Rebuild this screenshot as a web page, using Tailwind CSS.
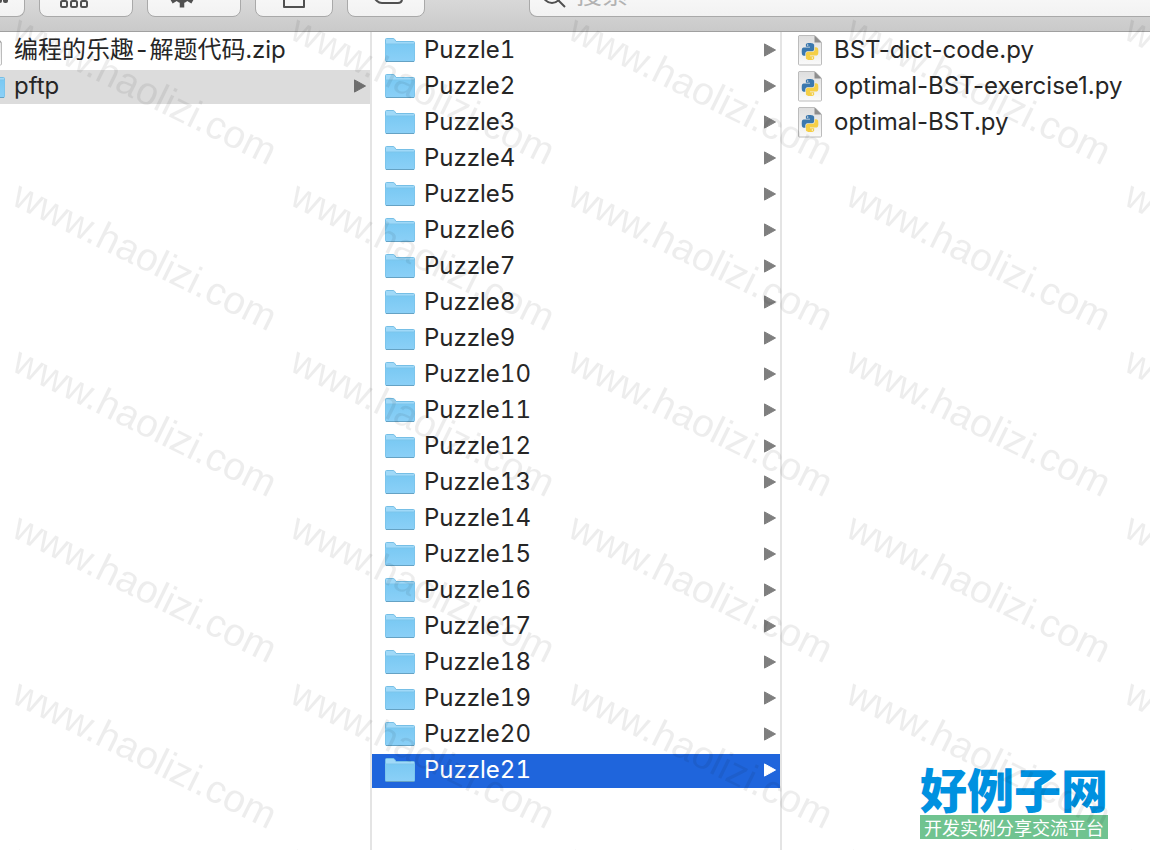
<!DOCTYPE html>
<html lang="zh-CN">
<head>
    <meta charset="UTF-8">
    <meta name="viewport" content="width=device-width, initial-scale=1.0">
    <title>pftp</title>
    <script src="https://cdn.jsdelivr.net/npm/@tailwindcss/browser@4"></script>
</head>
<body class="relative flex flex-col h-screen overflow-hidden bg-white text-[#262626] font-[Inter,'Noto_Sans_CJK_SC',sans-serif]">
    <!-- Shared icons -->
    <svg class="absolute w-0 h-0" aria-hidden="true">
        <defs>
            <linearGradient id="folderFill" x1="0" y1="0" x2="0" y2="1">
                <stop offset="0" stop-color="#7ac9f3"/>
                <stop offset="1" stop-color="#8bd0f7"/>
            </linearGradient>
            <linearGradient id="pageFill" x1="0" y1="0" x2="0" y2="1">
                <stop offset="0" stop-color="#dedede"/>
                <stop offset="1" stop-color="#fafafa"/>
            </linearGradient>
        </defs>
        <symbol id="folder" viewBox="0 0 30 26">
            <path d="M0.5 4V2.5Q0.5 1.5 1.5 1.5H8Q9 1.5 9.6 2.2L11 4.5H28.5Q29.5 4.5 29.5 5.5V23H0.5Z" fill="#a0d9f8" stroke="#76bfe6"/>
            <path d="M0.5 7H29.5V23.5Q29.5 24.5 28.5 24.5H1.5Q0.5 24.5 0.5 23.5Z" fill="url(#folderFill)" stroke="#7cc5ec"/>
            <path d="M1 24.5H29" stroke="#65a2c4"/>
        </symbol>
        <symbol id="page" viewBox="0 0 24 31">
            <path d="M1 0.5H16.5L23.5 7.5V29Q23.5 30 22.5 30H1.5Q0.5 30 0.5 29V1Z" fill="url(#pageFill)" stroke="#bcbcbc"/>
            <path d="M16.5 0.5V7.5H23.5Z" fill="#8e8e8e"/>
            <path d="M17.5 0.5L23.5 6.5" stroke="#e8e8e8"/>
        </symbol>
        <symbol id="snake" viewBox="0 0 24 24">
            <path d="M14.25.18l.9.2.73.26.59.3.45.32.34.34.25.34.16.33.1.3.04.26.02.2-.01.13V8.5l-.05.63-.13.55-.21.46-.26.38-.3.31-.33.25-.35.19-.35.14-.33.1-.3.07-.26.04-.21.02H8.77l-.69.05-.59.14-.5.22-.41.27-.33.32-.27.35-.2.36-.15.37-.1.35-.07.32-.04.27-.02.21v3.06H3.17l-.21-.03-.28-.07-.32-.12-.35-.18-.36-.26-.36-.36-.35-.46-.32-.59-.28-.73-.21-.88-.14-1.05-.05-1.23.06-1.22.16-1.04.24-.87.32-.71.36-.57.4-.44.42-.33.42-.24.4-.16.36-.1.32-.05.24-.01h.16l.06.01h8.16v-.83H6.18l-.01-2.75-.02-.37.05-.34.11-.31.17-.28.25-.26.31-.23.38-.2.44-.18.51-.15.58-.12.64-.1.71-.06.77-.04.84-.02 1.27.05zm-6.3 1.98l-.23.33-.08.41.08.41.23.34.33.22.41.09.41-.09.33-.22.23-.34.08-.41-.08-.41-.23-.33-.33-.22-.41-.09-.41.09z"/>
        </symbol>
        <symbol id="python" viewBox="0 0 24 31">
            <use href="#page"/>
            <g transform="translate(3.5 8) scale(0.71)">
                <use href="#snake" width="24" height="24" fill="#3b78ae"/>
                <use href="#snake" width="24" height="24" fill="#f5cf47" transform="rotate(180 12 12)"/>
            </g>
        </symbol>
        <symbol id="arrow" viewBox="0 0 12 14">
            <path d="M0.5 0.9L11.5 7L0.5 13.1Z" fill="currentColor" stroke="currentColor" stroke-linejoin="round"/>
        </symbol>
    </svg>

    <!-- Toolbar -->
    <header class="flex items-end gap-[14px] h-8 shrink-0 overflow-hidden pb-[14px] border-b border-[#a0a0a0] bg-linear-to-b from-[#d8d8d8] to-[#cacaca] text-[#505050]">
        <button aria-label="列表" class="w-[25px] h-11 shrink-0 flex items-end rounded-br-lg border-b border-r border-[#a9a9a9] bg-linear-to-b from-[#fdfdfd] to-[#f2f2f2]">
            <svg class="w-6 h-11" viewBox="0 0 24 44" fill="currentColor"><rect x="-3" y="26" width="5" height="5" rx="2"/><rect x="3" y="26" width="5" height="5" rx="2"/></svg>
        </button>
        <button aria-label="分组" class="w-[94px] h-11 shrink-0 flex justify-center rounded-lg border border-[#a9a9a9] bg-linear-to-b from-[#fdfdfd] to-[#f2f2f2]">
            <svg class="w-[94px] h-11 -mt-px shrink-0" viewBox="0 0 94 44" fill="none" stroke="currentColor" stroke-width="2"><rect x="22" y="28" width="6" height="6" rx="1.5"/><rect x="32" y="28" width="6" height="6" rx="1.5"/><rect x="42" y="28" width="6" height="6" rx="1.5"/></svg>
        </button>
        <button aria-label="操作" class="w-[94px] h-11 shrink-0 flex justify-center rounded-lg border border-[#a9a9a9] bg-linear-to-b from-[#fdfdfd] to-[#f2f2f2]">
            <svg class="w-[94px] h-11 -mt-px shrink-0" viewBox="0 0 94 44" fill="none" stroke="currentColor" stroke-width="4.5"><circle cx="35" cy="22" r="6"/><path d="M35 10V34.5M24.5 16L45.5 28.5M24.5 28.5L45.5 16"/></svg>
        </button>
        <button aria-label="共享" class="w-[78px] h-11 shrink-0 flex justify-center rounded-lg border border-[#a9a9a9] bg-linear-to-b from-[#fdfdfd] to-[#f2f2f2]">
            <svg class="w-[78px] h-11 -mt-px shrink-0" viewBox="0 0 78 44" fill="none" stroke="currentColor" stroke-width="2" stroke-linejoin="round"><path d="M29 18V34H49V18"/></svg>
        </button>
        <button aria-label="标签" class="w-[78px] h-11 shrink-0 flex justify-center rounded-lg border border-[#a9a9a9] bg-linear-to-b from-[#fdfdfd] to-[#f2f2f2]">
            <svg class="w-[78px] h-11 -mt-px shrink-0" viewBox="0 0 78 44" fill="none" stroke="currentColor" stroke-width="2"><path d="M34 12H51Q55 12 55 16V26Q55 30 51 30H35Q32 30 30 28L23 21L30 14Q32 12 34 12Z"/></svg>
        </button>
        <label class="flex flex-1 h-11 ml-[90px] rounded-l-lg border border-r-0 border-[#a9a9a9] bg-linear-to-b from-[#fdfdfd] to-[#f2f2f2] overflow-hidden">
            <svg class="w-[46px] h-11 -mt-px shrink-0" viewBox="0 0 46 44" fill="none" stroke="currentColor" stroke-width="2"><circle cx="22" cy="21" r="9"/><path d="M28 27L35 34"/></svg>
            <input type="text" aria-label="搜索" placeholder="搜索" class="flex-1 h-9 mt-[2px] text-[26px] outline-none placeholder:text-[#b2b2b2]">
        </label>
    </header>

    <!-- Columns -->
    <main class="flex flex-1 min-h-0 text-2xl">
        <nav aria-label="文件夹" class="flex justify-end w-[370px] shrink-0 overflow-hidden tabular-nums">
            <ul class="w-[408px] shrink-0 pt-[2px] space-y-[2px]">
                <li>
                    <a href="#" class="flex items-center gap-[9px] h-[34px] pl-[13px] pr-1 pb-[2px]">
                        <span class="flex justify-center w-[30px] shrink-0"><svg class="w-6 h-[31px]"><use href="#page"/></svg></span>
                        <span class="whitespace-nowrap">编程的乐趣-解题代码.zip</span>
                    </a>
                </li>
                <li>
                    <a href="#" class="flex items-center gap-[9px] h-[34px] pl-[13px] pr-1 pb-[2px] bg-[#dcdcdc]">
                        <svg class="w-[30px] h-[26px] shrink-0"><use href="#folder"/></svg>
                        <span class="flex-1">pftp</span>
                        <svg class="w-3 h-[14px] shrink-0 text-[#6e6e6e]"><use href="#arrow"/></svg>
                    </a>
                </li>
            </ul>
        </nav>
        <ul id="puzzles" class="w-[412px] shrink-0 pt-[2px] space-y-[2px] border-x-2 border-[#e4e4e4] tabular-nums"></ul>
        <ul id="files" class="flex-1 min-w-0 pt-[2px] space-y-[2px]"></ul>
    </main>

    <!-- Site badge -->
    <div class="absolute right-[42px] bottom-[11px] w-[188px] text-center whitespace-nowrap">
        <p class="h-12 leading-[42px] text-[47px] font-black text-[#0091e0] font-['Noto_Sans_CJK_SC',sans-serif]">好例子网</p>
        <p class="h-6 leading-6 text-lg text-white bg-[#70c390] font-['Noto_Sans_CJK_SC',sans-serif]">开发实例分享交流平台</p>
    </div>

    <!-- Watermark -->
    <svg class="absolute inset-0 w-full h-full pointer-events-none" aria-hidden="true">
        <defs>
            <pattern id="mark" x="0" y="10" width="278" height="166" patternUnits="userSpaceOnUse">
                <text transform="translate(10 28) rotate(26.3)" class="text-[39px] font-['Liberation_Sans',sans-serif]" fill="#000" fill-opacity="0.07">www.haolizi.com</text>
            </pattern>
        </defs>
        <rect y="17" width="100%" height="100%" fill="url(#mark)"/>
    </svg>

    <script>
        const puzzles = document.getElementById('puzzles');
        const files = document.getElementById('files');

        for (let i = 1; i <= 21; i++) {
            const selected = i === 21;
            const li = document.createElement('li');
            li.innerHTML = `
                <a href="#" class="flex items-center gap-[9px] h-[34px] pl-[13px] pr-1 pb-[2px] ${selected ? 'bg-[#1f65dc] text-white' : ''}">
                    <svg class="w-[30px] h-[26px] shrink-0"><use href="#folder"/></svg>
                    <span class="flex-1">Puzzle${i}</span>
                    <svg class="w-3 h-[14px] shrink-0 ${selected ? 'text-white' : 'text-[#7f7f7f]'}"><use href="#arrow"/></svg>
                </a>`;
            puzzles.appendChild(li);
        }

        ['BST-dict-code.py', 'optimal-BST-exercise1.py', 'optimal-BST.py'].forEach(name => {
            const li = document.createElement('li');
            li.innerHTML = `
                <a href="#" class="flex items-center gap-[9px] h-[34px] pl-[13px] pr-1 pb-[2px]">
                    <span class="flex justify-center w-[30px] shrink-0"><svg class="w-6 h-[31px]"><use href="#python"/></svg></span>
                    <span class="whitespace-nowrap">${name}</span>
                </a>`;
            files.appendChild(li);
        });
    </script>
</body>
</html>
